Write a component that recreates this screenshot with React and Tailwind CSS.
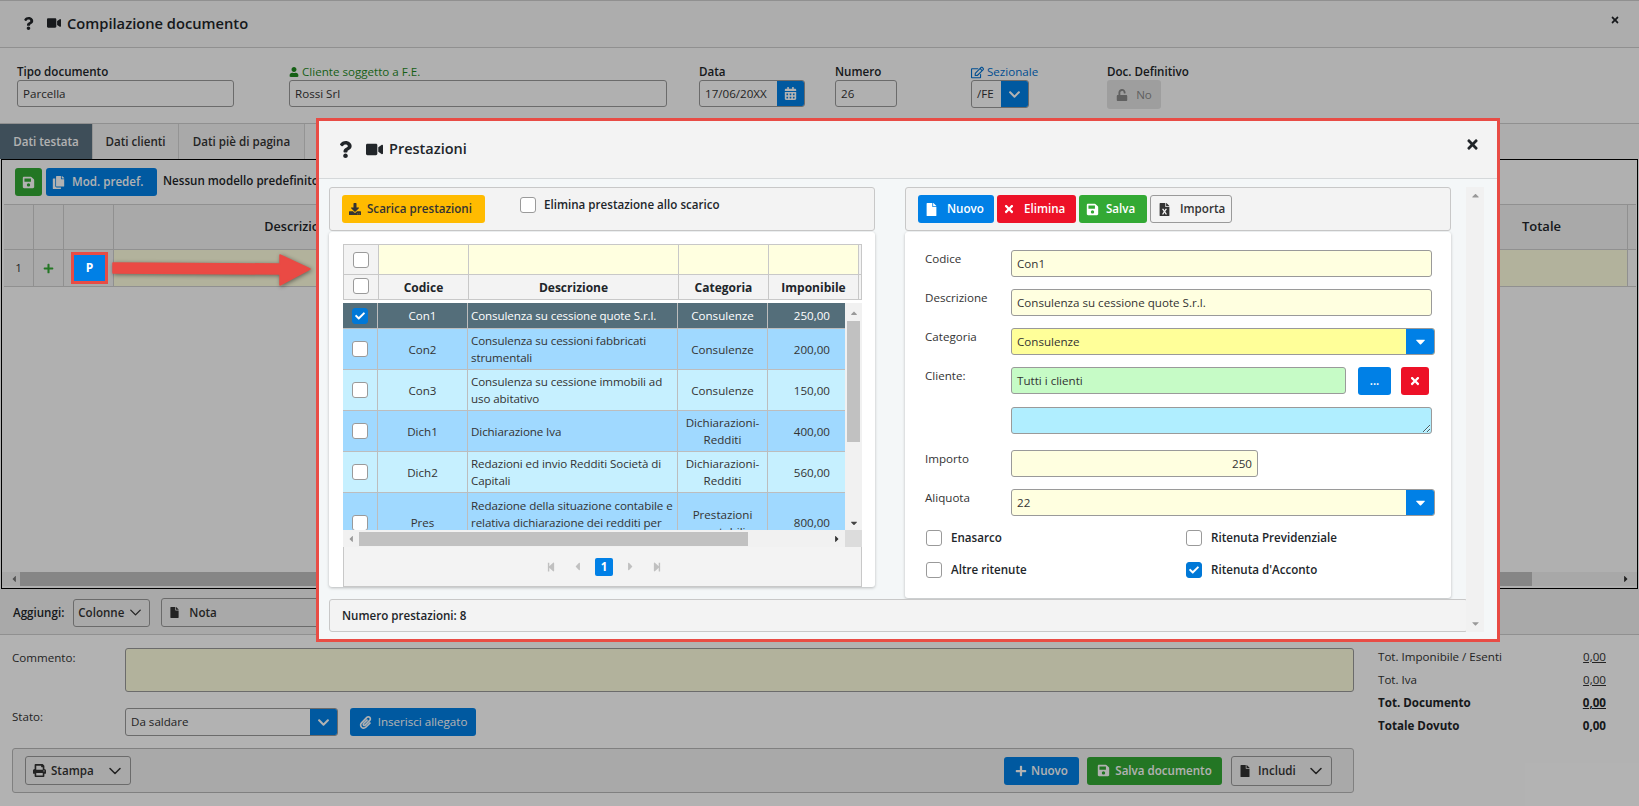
import React from "react";
import { FaQuestion, FaVideo, FaTimes, FaCalendarAlt, FaUser, FaRegEdit, FaUnlock, FaChevronDown, FaSave, FaCopy, FaPlus, FaDownload, FaCheck, FaCaretDown, FaCaretUp, FaCaretLeft, FaCaretRight, FaStepBackward, FaStepForward, FaFile, FaFileExcel, FaPrint, FaPaperclip } from "react-icons/fa";
import { ChevronDown } from "lucide-react";

const inputBase = "h-[27px] rounded-[3px] border border-[#9a9a9a] px-[5px] flex items-center text-[11.6px] text-[#333]";

function Field({ label, className, children, labelClass = "font-semibold text-[#212529]" }) {
  return (
    <div className={className}>
      <div className={"h-[16px] text-[11.6px] leading-[16px] whitespace-nowrap flex items-center gap-[3px] " + labelClass}>{label}</div>
      {children}
    </div>
  );
}

function Check({ checked, className = "" }) {
  return (
    <span className={"inline-flex w-[16px] h-[16px] shrink-0 items-center justify-center rounded-[3px] border " + (checked ? "bg-[#0078d7] border-[#0078d7] " : "bg-white border-[#9a9a9a] ") + className}>
      {checked && <FaCheck className="text-white text-[10px]" />}
    </span>
  );
}

const rows = [
  { c: "Con1", d: ["Consulenza su cessione quote S.r.l."], k: ["Consulenze"], v: "250,00", h: "h-[26px]", bg: "bg-[#546e7a] text-white", sel: true },
  { c: "Con2", d: ["Consulenza su cessioni fabbricati", "strumentali"], k: ["Consulenze"], v: "200,00", h: "h-[41px]", bg: "bg-[#a0d9ff]" },
  { c: "Con3", d: ["Consulenza su cessione immobili ad", "uso abitativo"], k: ["Consulenze"], v: "150,00", h: "h-[41px]", bg: "bg-[#c6f0ff]" },
  { c: "Dich1", d: ["Dichiarazione Iva"], k: ["Dichiarazioni-", "Redditi"], v: "400,00", h: "h-[41px]", bg: "bg-[#a0d9ff]" },
  { c: "Dich2", d: ["Redazioni ed invio Redditi Società di", "Capitali"], k: ["Dichiarazioni-", "Redditi"], v: "560,00", h: "h-[41px]", bg: "bg-[#c6f0ff]" },
  { c: "Pres", d: ["Redazione della situazione contabile e", "relativa dichiarazione dei redditi per"], k: ["Prestazioni", "contabili"], v: "800,00", h: "h-[60px]", bg: "bg-[#a0d9ff]", top: true },
];

function Blue({ className = "", children }) {
  return <button className={"rounded-[3px] bg-[#0080e6] text-white flex items-center justify-center font-semibold text-[11.6px] " + className}>{children}</button>;
}

function FormRow({ label, className = "", children }) {
  return (
    <div className={"flex " + className}>
      <div className="w-[106px] pl-[20px] text-[11.6px] leading-[18px] text-[#333]">{label}</div>
      {children}
    </div>
  );
}

export default function App() {
  return (
    <div className="relative h-[806px] w-[1639px] overflow-hidden bg-white text-[11.6px] text-[#333] font-['Open_Sans','Noto_Sans',sans-serif]">
      {/* Page header */}
      <div className="h-[48px] flex items-center bg-[#f8f8f8] border-t border-b border-[#cfcfcf] text-[#212529] pb-[2px]">
        <FaQuestion className="ml-[22px] text-[13px]" />
        <FaVideo className="ml-[12px] text-[14px]" />
        <span className="ml-[6px] text-[14.7px] font-semibold">Compilazione documento</span>
        <FaTimes className="ml-auto mr-[19px] text-[10px] -mt-[6px]" />
      </div>

      {/* Document fields */}
      <div className="h-[76px] flex pt-[16px] bg-[#fdfdfd] border-b border-[#cfcfcf]">
        <Field label="Tipo documento" className="ml-[17px] w-[217px]">
          <div className={inputBase}>Parcella</div>
        </Field>
        <Field label={<><FaUser className="shrink-0 text-[10px] text-[#1f8a1f]" />Cliente soggetto a F.E.</>} labelClass="text-[#1f8a1f]" className="ml-[55px] w-[378px]">
          <div className={inputBase}>Rossi Srl</div>
        </Field>
        <Field label="Data" className="ml-[32px] w-[106px]">
          <div className={inputBase + " !pr-0 overflow-hidden"}>
            <span>17/06/20XX</span>
            <span className="ml-auto h-full w-[27px] bg-[#0080e6] flex items-center justify-center"><FaCalendarAlt className="text-white text-[13px]" /></span>
          </div>
        </Field>
        <Field label="Numero" className="ml-[30px] w-[62px]">
          <div className={inputBase}>26</div>
        </Field>
        <Field label={<><FaRegEdit className="shrink-0 text-[13px]" />Sezionale</>} labelClass="text-[#0070d0]" className="ml-[74px] w-[58px]">
          <div className={inputBase + " h-[28px] !pr-0 overflow-hidden"}>
            <span>/FE</span>
            <span className="ml-auto h-full w-[27px] bg-[#0080e6] flex items-center justify-center"><FaChevronDown className="text-white text-[13px]" /></span>
          </div>
        </Field>
        <Field label="Doc. Definitivo" className="ml-[78px] w-[100px]">
          <div className="h-[29px] w-[54px] rounded-[3px] bg-[#e3e3e3] text-[#8a8a8a] flex items-center justify-center gap-[8px]"><FaUnlock className="text-[12px]" />No</div>
        </Field>
      </div>

      {/* Tabs */}
      <div className="h-[35px] flex bg-[#f8f8f8] font-semibold text-[#333]">
        <div className="w-[92px] flex items-center justify-center bg-[#5a7080] text-white font-semibold">Dati testata</div>
        <div className="w-[87px] flex items-center justify-center border-x border-[#d5d5d5] bg-[#f3f3f3]">Dati clienti</div>
        <div className="w-[126px] flex items-center justify-center border-r border-[#d5d5d5] bg-[#f3f3f3]">Dati piè di pagina</div>
      </div>

      {/* Document grid */}
      <div className="h-[430px] mx-[1px] border border-black flex flex-col bg-[#fdfdfd]">
        <div className="h-[44px] shrink-0 flex pt-[8px] pl-[13px] gap-[4px]">
          <button className="w-[27px] h-[28px] rounded-[3px] bg-[#33a934] flex items-center justify-center"><FaSave className="text-white text-[13px]" /></button>
          <Blue className="w-[111px] h-[28px] gap-[7px] !justify-start pl-[6px]"><FaCopy className="text-[13px]" />Mod. predef.</Blue>
          <span className="ml-[2px] font-semibold text-[#212529] leading-[26px]">Nessun modello predefinito</span>
        </div>
        <div className="h-[46px] shrink-0 flex ml-[2px] mr-[1px] bg-[#f3f3f3] border-y border-[#cfcfcf] font-semibold text-[#212529]">
          <div className="w-[30px] border-r border-[#cfcfcf]" />
          <div className="w-[30px] border-r border-[#cfcfcf]" />
          <div className="w-[50px] border-r border-[#cfcfcf]" />
          <div className="w-[371px] flex items-center justify-center text-[12.6px]">Descrizione</div>
          <div className="flex-1" />
          <div className="w-[172px] flex items-center justify-center text-[13px] border-r border-[#cfcfcf]">Totale</div>
          <div className="w-[8px]" />
        </div>
        <div className="h-[37px] shrink-0 flex ml-[2px] mr-[1px] border-b border-[#cfcfcf]">
          <div className="w-[30px] border-r border-[#cfcfcf] flex items-center justify-center bg-[#f3f3f3]">1</div>
          <div className="w-[30px] border-r border-[#cfcfcf] flex items-center justify-center bg-[#f3f3f3]"><FaPlus className="text-[#33a934] text-[11px]" /></div>
          <div className="w-[50px] border-r border-[#cfcfcf] bg-[#f3f3f3]" />
          <div className="flex-1 bg-[#ffffe0] border-r border-[#cfcfcf]" />
          <div className="w-[8px]" />
        </div>
        <div className="mt-auto mb-[2px] h-[14px] flex items-center bg-[#f1f1f1]">
          <FaCaretLeft className="ml-[6px] w-[12px] text-[10px] text-[#777]" />
          <div className="h-full w-[1512px] bg-[#c1c1c1]" />
          <FaCaretRight className="ml-auto mr-[6px] text-[10px] text-[#333]" />
        </div>
      </div>

      {/* Add bar */}
      <div className="h-[46px] flex items-center bg-[#f3f3f3] border-b border-[#cfcfcf] pl-[13px] pt-[2px]">
        <span className="font-semibold text-[#212529]">Aggiungi:</span>
        <button className="ml-[9px] w-[77px] h-[28px] rounded-[3px] border border-[#9a9a9a] flex items-center justify-center gap-[2px] font-semibold">Colonne <ChevronDown size={19} strokeWidth={1.7} /></button>
        <button className="ml-[11px] w-[200px] h-[29px] rounded-[3px] border border-[#9a9a9a] flex items-center pl-[7px] gap-[9px] font-semibold"><FaFile className="text-[11px]" />Nota</button>
      </div>

      {/* Bottom */}
      <div className="flex">
        <div className="w-[1354px]">
          <div className="mt-[13px] flex pl-[12px]">
            <div className="w-[113px] leading-[18px] pt-[1px]">Commento:</div>
            <div className="flex-1 h-[44px] rounded-[3px] border border-[#9a9a9a] bg-[#ffffe0]" />
          </div>
          <div className="mt-[16px] flex pl-[12px]">
            <div className="w-[113px] leading-[18px]">Stato:</div>
            <div className={inputBase + " h-[28px] w-[213px] !pr-0 overflow-hidden"}>
              <span>Da saldare</span>
              <span className="ml-auto h-full w-[27px] bg-[#0080e6] flex items-center justify-center"><FaChevronDown className="text-white text-[13px]" /></span>
            </div>
            <Blue className="ml-[12px] w-[126px] h-[28px] gap-[6px] !font-normal"><FaPaperclip className="text-[13px]" />Inserisci allegato</Blue>
          </div>
          <div className="mt-[12px] ml-[12px] h-[45px] rounded-[3px] border border-[#b8b8b8] bg-[#f3f3f3] flex items-center pl-[12px] pr-[21px] font-semibold">
            <button className="w-[106px] h-[29px] rounded-[3px] border border-[#9a9a9a] flex items-center pl-[7px] gap-[5px]"><FaPrint className="text-[13px]" />Stampa<ChevronDown size={20} strokeWidth={1.9} className="ml-auto mr-[5px]" /></button>
            <Blue className="ml-auto w-[75px] h-[28px] gap-[4px]"><FaPlus className="text-[12px]" />Nuovo</Blue>
            <button className="ml-[8px] w-[135px] h-[28px] rounded-[3px] bg-[#33a934] text-white flex items-center justify-center gap-[5px]"><FaSave className="text-[13px]" />Salva documento</button>
            <button className="ml-[9px] w-[101px] h-[30px] rounded-[3px] border border-[#9a9a9a] flex items-center pl-[7px] gap-[7px]"><FaFile className="text-[12px]" />Includi<ChevronDown size={20} strokeWidth={1.9} className="ml-auto mr-[5px]" /></button>
          </div>
        </div>
        <div className="ml-[24px] w-[228px] pt-[10px] text-[#333]">
          <div className="h-[23px] flex items-center justify-between"><span>Tot. Imponibile / Esenti</span><span className="underline">0,00</span></div>
          <div className="h-[23px] flex items-center justify-between"><span>Tot. Iva</span><span className="underline">0,00</span></div>
          <div className="h-[23px] flex items-center justify-between font-bold text-[#212529]"><span>Tot. Documento</span><span className="underline">0,00</span></div>
          <div className="h-[23px] flex items-center justify-between font-bold text-[#212529]"><span>Totale Dovuto</span><span>0,00</span></div>
        </div>
      </div>

      {/* Dimming overlay */}
      <div className="absolute inset-0 bg-black/30" />

      {/* Highlighted P button and arrow */}
      <div className="absolute left-[71px] top-[252px] w-[37px] h-[32px] border-[3px] border-[#e84c45] flex items-center justify-center">
        <span className="w-[31px] h-[26px] bg-[#0080e6] text-white font-bold text-[12px] flex items-center justify-center">P</span>
      </div>
      <svg className="absolute left-[110px] top-[250px] drop-shadow-[1px_1px_2px_rgba(0,0,0,0.45)]" width="205" height="40" viewBox="0 0 205 40">
        <path d="M3 13 L170 14 L170 5 L200 19 L170 35 L170 24 L3 23 Z" fill="#ea4a44" stroke="#ea4a44" strokeWidth="1.5" strokeLinejoin="round" />
      </svg>

      {/* Modal */}
      <div className="absolute left-[316px] top-[118px] w-[1184px] h-[524px] border-[3px] border-[#e84c45] bg-[#f4f7f8] flex flex-col text-[#333]">
        <div className="h-[58px] shrink-0 flex items-center bg-[#f3f3f3] border-b border-[#d5d8da] text-[#212529] pb-[1px]">
          <FaQuestion className="ml-[18px] text-[17px]" />
          <FaVideo className="ml-[12px] text-[17px]" />
          <span className="ml-[6px] text-[14.5px] font-semibold">Prestazioni</span>
          <FaTimes className="ml-auto mr-[17px] text-[15px] -mt-[10px]" />
        </div>

        <div className="flex-1 flex pl-[10px] pt-[8px] min-h-0">
          <div className="w-[1139px]">
            <div className="flex gap-[30px] items-start">
              {/* Left column */}
              <div className="w-[546px]">
                <div className="h-[44px] rounded-[3px] border border-[#c8c8c8] bg-[#f3f3f3] flex pl-[12px] pt-[7px]">
                  <button className="w-[143px] h-[28px] rounded-[3px] bg-[#ffbb00] text-[#333] flex items-center pl-[7px] gap-[6px] font-semibold"><FaDownload className="text-[12px]" />Scarica prestazioni</button>
                  <Check className="ml-[35px] mt-[2px]" />
                  <span className="ml-[8px] font-semibold leading-[20px] text-[#212529]">Elimina prestazione allo scarico</span>
                </div>
                <div className="mt-[1px] h-[355px] rounded-[3px] bg-white shadow-[0_1px_3px_rgba(0,0,0,0.25)] pl-[14px] pr-[13px] pt-[12px] flex flex-col">
                  <div className="border border-[#c8c8c8] border-b-0 bg-[#f3f3f3]">
                    <div className="h-[30px] flex border-b border-[#c8c8c8]">
                      <div className="w-[35px] border-r border-[#c8c8c8] flex items-center justify-center"><Check /></div>
                      <div className="w-[90px] border-r border-[#c8c8c8] bg-[#ffffe0]" />
                      <div className="w-[210px] border-r border-[#c8c8c8] bg-[#ffffe0]" />
                      <div className="w-[90px] border-r border-[#c8c8c8] bg-[#ffffe0]" />
                      <div className="w-[90px] border-r border-[#c8c8c8] bg-[#ffffe0]" />
                    </div>
                    <div className="h-[25px] flex border-b border-[#c8c8c8] font-bold text-[12px] text-[#212529]">
                      <div className="w-[35px] border-r border-[#c8c8c8] flex items-center justify-center"><Check className="-mt-[3px]" /></div>
                      <div className="w-[90px] border-r border-[#c8c8c8] flex items-center justify-center pt-[2px]">Codice</div>
                      <div className="w-[210px] border-r border-[#c8c8c8] flex items-center justify-center pt-[2px]">Descrizione</div>
                      <div className="w-[90px] border-r border-[#c8c8c8] flex items-center justify-center pt-[2px]">Categoria</div>
                      <div className="w-[90px] border-r border-[#c8c8c8] flex items-center justify-center pt-[2px]">Imponibile</div>
                    </div>
                  </div>
                  <div className="mt-[3px] h-[227px] shrink-0 flex overflow-hidden bg-[#f1f1f1]">
                    <div className="w-[502px] h-full overflow-hidden">
                      {rows.map((r) => (
                        <div key={r.c} className={"flex border-b border-[#bdbdbd] leading-[17px] " + r.h + " " + r.bg}>
                          <div className="w-[35px] shrink-0 border-r border-[#bdbdbd] flex items-center justify-center"><Check checked={r.sel} /></div>
                          <div className="w-[90px] shrink-0 border-r border-[#bdbdbd] flex items-center justify-center">{r.c}</div>
                          <div className={"w-[210px] shrink-0 border-r border-[#bdbdbd] flex flex-col px-[3px] tracking-[-0.1px] whitespace-nowrap " + (r.top ? "justify-start pt-[4px]" : "justify-center")}>
                            {r.d.map((x) => <span key={x}>{x}</span>)}
                          </div>
                          <div className="w-[90px] shrink-0 border-r border-[#bdbdbd] flex flex-col items-center justify-center">
                            {r.k.map((x) => <span key={x}>{x}</span>)}
                          </div>
                          <div className="flex-1 flex items-center justify-end pr-[15px]">{r.v}</div>
                        </div>
                      ))}
                    </div>
                    <div className="flex-1 flex flex-col items-center">
                      <FaCaretUp className="text-[10px] text-[#999] mt-[5px]" />
                      <div className="mt-[3px] w-[13px] h-[121px] bg-[#c1c1c1]" />
                      <FaCaretDown className="text-[10px] text-[#444] mt-[76px]" />
                    </div>
                  </div>
                  <div className="h-[17px] shrink-0 flex items-center bg-[#f1f1f1]">
                    <FaCaretLeft className="ml-[3px] text-[10px] text-[#999]" />
                    <div className="ml-[3px] h-[14px] w-[389px] bg-[#c1c1c1]" />
                    <FaCaretRight className="ml-[84px] text-[10px] text-[#333]" />
                    <div className="ml-auto w-[17px] h-full bg-[#dcdcdc]" />
                  </div>
                  <div className="flex-1 border-x border-b border-[#c8c8c8] bg-[#f3f3f3] flex items-center pl-[202px] gap-[15px] text-[#c0c0c0]">
                    <FaStepBackward className="text-[10px]" />
                    <FaCaretLeft className="text-[13px]" />
                    <span className="w-[18px] h-[18px] rounded-[2px] bg-[#0080e6] text-white font-bold flex items-center justify-center -mx-[4px]">1</span>
                    <FaCaretRight className="text-[13px]" />
                    <FaStepForward className="text-[10px]" />
                  </div>
                </div>
              </div>

              {/* Right column */}
              <div className="w-[546px]">
                <div className="h-[44px] rounded-[3px] border border-[#c8c8c8] bg-[#f3f3f3] flex pl-[12px] pt-[7px] gap-[3px] font-semibold">
                  <Blue className="w-[76px] h-[28px] gap-[9px] !justify-start pl-[7px]"><FaFile className="text-[13px]" />Nuovo</Blue>
                  <button className="w-[79px] h-[28px] rounded-[3px] bg-[#ed1127] text-white flex items-center pl-[6px] gap-[9px]"><FaTimes className="text-[12px]" />Elimina</button>
                  <button className="w-[68px] h-[28px] rounded-[3px] bg-[#33a934] text-white flex items-center pl-[7px] gap-[7px]"><FaSave className="text-[13px]" />Salva</button>
                  <button className="w-[82px] h-[28px] rounded-[3px] border border-[#9a9a9a] text-[#333] flex items-center pl-[7px] gap-[9px]"><FaFileExcel className="text-[13px]" />Importa</button>
                </div>
                <div className="mt-[1px] h-[366px] rounded-[3px] bg-white shadow-[0_1px_3px_rgba(0,0,0,0.25)] pt-[18px]">
                  <FormRow label="Codice">
                    <div className={inputBase + " w-[421px] bg-[#ffffe0]"}>Con1</div>
                  </FormRow>
                  <FormRow label="Descrizione" className="mt-[12px]">
                    <div className={inputBase + " w-[421px] bg-[#ffffe0]"}>Consulenza su cessione quote S.r.l.</div>
                  </FormRow>
                  <FormRow label="Categoria" className="mt-[12px]">
                    <div className={inputBase + " w-[424px] !pr-0 bg-[#ffff99] overflow-hidden"}>
                      <span>Consulenze</span>
                      <span className="ml-auto h-full w-[28px] bg-[#0080e6] flex items-center justify-center"><FaCaretDown className="text-white text-[15px]" /></span>
                    </div>
                  </FormRow>
                  <FormRow label="Cliente:" className="mt-[12px]">
                    <div className={inputBase + " w-[335px] bg-[#c6fbc6]"}>Tutti i clienti</div>
                    <Blue className="ml-[12px] w-[33px] h-[28px]">...</Blue>
                    <button className="ml-[10px] w-[28px] h-[28px] rounded-[3px] bg-[#ed1127] flex items-center justify-center"><FaTimes className="text-white text-[12px]" /></button>
                  </FormRow>
                  <FormRow className="mt-[12px]">
                    <textarea readOnly className="block h-[27px] w-[421px] rounded-[3px] border border-[#9a9a9a] bg-[#b0eeff]" />
                  </FormRow>
                  <FormRow label="Importo" className="mt-[16px]">
                    <div className={inputBase + " w-[247px] bg-[#ffffe0] justify-end"}>250</div>
                  </FormRow>
                  <FormRow label="Aliquota" className="mt-[12px]">
                    <div className={inputBase + " w-[424px] !pr-0 bg-[#ffffe0] overflow-hidden"}>
                      <span>22</span>
                      <span className="ml-auto h-full w-[28px] bg-[#0080e6] flex items-center justify-center"><FaCaretDown className="text-white text-[15px]" /></span>
                    </div>
                  </FormRow>
                  <div className="mt-[14px] grid grid-cols-[260px_1fr] gap-y-[16px] pl-[21px] font-semibold text-[#212529]">
                    <div className="h-[16px] flex items-center gap-[9px]"><Check />Enasarco</div>
                    <div className="h-[16px] flex items-center gap-[9px]"><Check />Ritenuta Previdenziale</div>
                    <div className="h-[16px] flex items-center gap-[9px]"><Check />Altre ritenute</div>
                    <div className="h-[16px] flex items-center gap-[9px]"><Check checked />Ritenuta d'Acconto</div>
                  </div>
                </div>
              </div>
            </div>
          </div>
        </div>
        {/* Footer */}
        <div className="mb-[7px] ml-[10px] w-[1139px] h-[33px] rounded-[3px] border border-[#c8c8c8] bg-[#f3f3f3] flex items-center pl-[12px] font-semibold text-[#212529]">Numero prestazioni: 8</div>
        {/* Modal scrollbar */}
        <div className="absolute left-[1147px] top-[66px] w-[18px] h-[445px] bg-[#f1f1f1] flex flex-col items-center justify-between py-[3px] text-[#999]">
          <FaCaretUp className="text-[11px]" />
          <FaCaretDown className="text-[11px]" />
        </div>
      </div>
    </div>
  );
}
